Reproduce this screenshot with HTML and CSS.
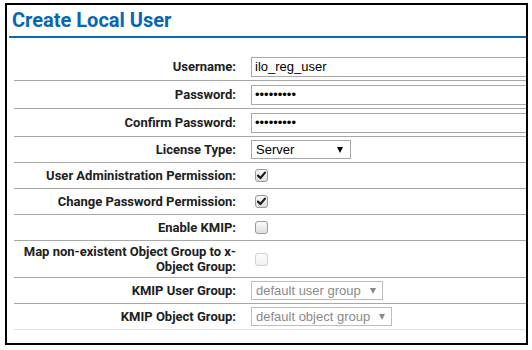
FILE: index.html
```html
<!DOCTYPE html>
<html>
<head lang="en">
    <meta charset="UTF-8">
    <title>Create Local User</title>
    <link rel="stylesheet" href="styles.css">
</head>
<body>
<div id="panel">
    <h1 class="title">Create Local User</h1>

    <div class="form">
        <div class="row r-input">
            <label class="lbl">Username:</label>
            <div class="val"><input type="text" class="txt" value="ilo_reg_user"></div>
        </div>
        <div class="row r-input">
            <label class="lbl">Password:</label>
            <div class="val"><input type="password" class="txt" value="123456789"></div>
        </div>
        <div class="row r-input">
            <label class="lbl">Confirm Password:</label>
            <div class="val"><input type="password" class="txt" value="123456789"></div>
        </div>
        <div class="row">
            <label class="lbl">License Type:</label>
            <div class="val">
                <div class="select sel-server"><span>Server</span><i class="caret"></i></div>
            </div>
        </div>
        <div class="row">
            <label class="lbl">User Administration Permission:</label>
            <div class="val">
                <span class="cb"><svg width="11" height="11" viewBox="0 0 11 11"><path d="M2 5.6 L4.4 8 L9 2.6" fill="none" stroke="#1e1e1e" stroke-width="2.2" stroke-linecap="round" stroke-linejoin="round"/></svg></span>
            </div>
        </div>
        <div class="row">
            <label class="lbl">Change Password Permission:</label>
            <div class="val">
                <span class="cb"><svg width="11" height="11" viewBox="0 0 11 11"><path d="M2 5.6 L4.4 8 L9 2.6" fill="none" stroke="#1e1e1e" stroke-width="2.2" stroke-linecap="round" stroke-linejoin="round"/></svg></span>
            </div>
        </div>
        <div class="row">
            <label class="lbl">Enable KMIP:</label>
            <div class="val"><span class="cb"></span></div>
        </div>
        <div class="row r-tall">
            <label class="lbl">Map non-existent Object Group to x-Object Group:</label>
            <div class="val"><span class="cb off"></span></div>
        </div>
        <div class="row">
            <label class="lbl">KMIP User Group:</label>
            <div class="val">
                <div class="select off"><span>default user group</span><i class="caret"></i></div>
            </div>
        </div>
        <div class="row last">
            <label class="lbl">KMIP Object Group:</label>
            <div class="val">
                <div class="select off"><span>default object group</span><i class="caret"></i></div>
            </div>
        </div>
    </div>
</div>
</body>
</html>
```

FILE: styles.css
```css
*{
    padding: 0;
    margin: 0;
    box-sizing: border-box;
}
body{
    background: #fff;
    font-family: Roboto, "Liberation Sans", sans-serif;
}

#panel{
    margin: 3px 0 0 5px;
    width: 523px;
    height: 342px;
    border: 2px solid #000;
    overflow: hidden;
}

.title{
    margin: 0 0 0 2px;
    padding: 3px 0 4px 3px;
    font-size: 20px;
    line-height: 24px;
    font-weight: bold;
    color: #0767b3;
    border-bottom: 2px solid #0a6ab5;
}

.form{
    margin: 15px 0 0 7px;
}

.row{
    display: grid;
    grid-template-columns: 227px 1fr;
    align-items: center;
    height: 26px;
    border-bottom: 1px solid #a8a8a8;
}
.row.r-input{
    height: 28px;
}
.row.r-tall{
    height: 37px;
}
.row.last{
    border-bottom-color: #e2e2e2;
}

.lbl{
    padding: 0 5px 0 8px;
    text-align: right;
    font-size: 13px;
    line-height: 15px;
    font-weight: bold;
    color: #202020;
}

.val{
    display: flex;
    align-items: center;
    padding-left: 10px;
}

.txt{
    width: 300px;
    height: 20px;
    padding: 0 3px;
    border: 1px solid #a9a9a9;
    font-family: "Liberation Sans", Arial, sans-serif;
    font-size: 13px;
    color: #000;
    background: #fff;
    outline: none;
}

.select{
    display: flex;
    align-items: center;
    justify-content: space-between;
    height: 19px;
    padding: 0 7px 0 4px;
    border: 1px solid #a6a6a6;
    font-family: "Liberation Sans", Arial, sans-serif;
    font-size: 13px;
    color: #000;
    background: #fff;
}
.sel-server{
    width: 100px;
}
.select .caret{
    width: 0;
    height: 0;
    border-left: 3.5px solid transparent;
    border-right: 3.5px solid transparent;
    border-top: 6px solid #000;
}
.select.off{
    padding-right: 6px;
    border-color: #bdbdbd;
    color: #8a8a8a;
}
.select.off span{
    margin-right: 9px;
}
.select.off .caret{
    border-left-width: 3px;
    border-right-width: 3px;
    border-top: 6px solid #8a8a8a;
}

.cb{
    display: flex;
    align-items: center;
    justify-content: center;
    width: 13px;
    height: 13px;
    margin-left: 4px;
    border: 1px solid #9a9a9a;
    border-radius: 3px;
    background: linear-gradient(#fafafa, #dedede);
}
.cb.off{
    border-color: #d0d0d0;
    background: linear-gradient(#fcfcfc, #f0f0f0);
}
```
